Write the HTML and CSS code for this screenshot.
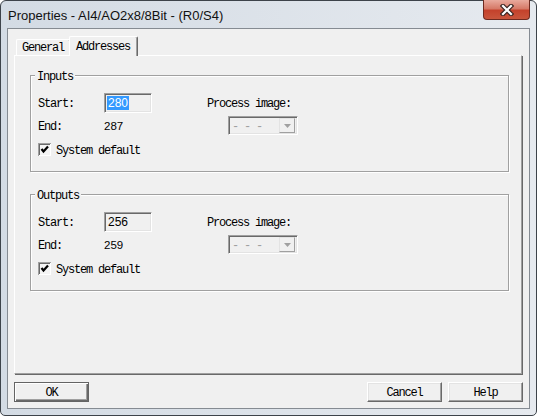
FILE: index.html
```html
<!DOCTYPE html>
<html>
<head>
  <title>Properties - AI4/AO2x8/8Bit - (R0/S4)</title>
  <link rel="stylesheet" href="styles.css">
</head>
<body>

  <div class="window">
    <div class="titlebar">
      <span class="title">Properties - AI4/AO2x8/8Bit - (R0/S4)</span>
      <button class="close">
        <svg width="14" height="12" viewBox="0 0 14 12">
          <path d="M3 2 L11 10 M11 2 L3 10" stroke="#3b2622" stroke-width="4.5" stroke-linecap="square"/>
          <path d="M3 2 L11 10 M11 2 L3 10" stroke="#fff" stroke-width="2.2" stroke-linecap="square"/>
        </svg>
      </button>
    </div>

    <div class="client">
      <div class="tabs">
        <div class="tab">General</div>
        <div class="tab active">Addresses</div>
      </div>

      <div class="panel">
        <div class="group">
          <div class="legend">Inputs</div>
          <div class="fields">
            <span class="lbl">Start:</span>
            <span class="edit"><span class="sel">280</span></span>
            <span class="lbl">Process image:</span>
            <span class="lbl">End:</span>
            <span class="num">287</span>
            <span class="combo">
              <span class="combo-text">- - -</span>
              <span class="drop"><svg width="7" height="4" viewBox="0 0 7 4"><path d="M0 0 H7 L3.5 4 Z" fill="#a0a0a0"/></svg></span>
            </span>
            <span class="check">
              <svg class="box" width="13" height="13" viewBox="0 0 13 13">
                <rect x="0" y="0" width="13" height="13" fill="#a0a0a0"/>
                <rect x="1" y="1" width="12" height="12" fill="#fff"/>
                <rect x="1" y="1" width="11" height="11" fill="#696969"/>
                <rect x="2" y="2" width="10" height="10" fill="#f4f4f4"/>
                <path d="M3.5 6 L5.5 8.5 L10 3.5" stroke="#000" stroke-width="2.2" fill="none"/>
              </svg>
              <span class="check-text">System default</span>
            </span>
          </div>
        </div>

        <div class="group">
          <div class="legend">Outputs</div>
          <div class="fields">
            <span class="lbl">Start:</span>
            <span class="edit"><span class="val">256</span></span>
            <span class="lbl">Process image:</span>
            <span class="lbl">End:</span>
            <span class="num">259</span>
            <span class="combo">
              <span class="combo-text">- - -</span>
              <span class="drop"><svg width="7" height="4" viewBox="0 0 7 4"><path d="M0 0 H7 L3.5 4 Z" fill="#a0a0a0"/></svg></span>
            </span>
            <span class="check">
              <svg class="box" width="13" height="13" viewBox="0 0 13 13">
                <rect x="0" y="0" width="13" height="13" fill="#a0a0a0"/>
                <rect x="1" y="1" width="12" height="12" fill="#fff"/>
                <rect x="1" y="1" width="11" height="11" fill="#696969"/>
                <rect x="2" y="2" width="10" height="10" fill="#f4f4f4"/>
                <path d="M3.5 6 L5.5 8.5 L10 3.5" stroke="#000" stroke-width="2.2" fill="none"/>
              </svg>
              <span class="check-text">System default</span>
            </span>
          </div>
        </div>
      </div>

      <div class="buttons">
        <button class="btn default">OK</button>
        <span class="spacer"></span>
        <button class="btn">Cancel</button>
        <button class="btn">Help</button>
      </div>
    </div>
  </div>

</body>
</html>
```

FILE: styles.css
```css
body {
  margin: 0;
  background: #fff;
}

.window {
  width: 537px;
  height: 416px;
  box-sizing: border-box;
  border: 1px solid #3d434a;
  border-radius: 6px 6px 5px 5px;
  background: linear-gradient(to right, #d3dbe4, #e6eaef);
  padding: 0 6px 6px 6px;
  display: flex;
  flex-direction: column;
}

.titlebar {
  height: 27px;
  display: flex;
  align-items: flex-start;
}

.title {
  font-family: "Liberation Sans", sans-serif;
  font-size: 13px;
  color: #111;
  padding: 7px 0 0 1px;
}

.close {
  margin: -1px 0 0 auto;
  width: 47px;
  height: 20px;
  padding: 0;
  border: 1px solid #6e2a20;
  border-top: none;
  border-radius: 0 0 4px 4px;
  background: linear-gradient(#e9aa9d, #d67a68 45%, #c4422c 55%, #c9553c);
  display: flex;
  align-items: center;
  justify-content: center;
}

.client {
  flex: 1;
  background: #f0f0f0;
  border: 1px solid #858b92;
  padding: 7px 6px 6px 6px;
  display: flex;
  flex-direction: column;
  font-family: "Liberation Mono", monospace;
  font-size: 12px;
  letter-spacing: -1.2px;
  color: #000;
}

.tabs {
  height: 19px;
  display: flex;
  align-items: flex-end;
  padding-left: 2px;
}

.tab {
  height: 16px;
  line-height: 17px;
  box-sizing: border-box;
  padding: 0 6px 0 5px;
  border: 1px solid #fff;
  border-right-color: #696969;
  border-bottom: none;
  border-radius: 2px 2px 0 0;
  box-shadow: inset -1px 0 0 #a0a0a0;
  background: #f0f0f0;
}

.tab.active {
  height: 20px;
  line-height: 20px;
  padding: 0 7px 0 6px;
  margin: 0 0 -1px -2px;
  position: relative;
  z-index: 1;
}

.panel {
  flex: 1;
  margin-right: 1px;
  border: 1px solid #fff;
  border-right-color: #a0a0a0;
  border-bottom-color: #a0a0a0;
  box-shadow: 1px 1px 0 #696969;
  padding: 19px 12px 0 15px;
}

.group {
  height: 97px;
  box-sizing: border-box;
  border: 1px solid #a0a0a0;
  box-shadow: 1px 1px 0 #fff, inset 1px 1px 0 #fff;
  padding: 0 7px;
  margin-bottom: 22px;
}

.legend {
  width: fit-content;
  line-height: 14px;
  margin: -8px 0 0 -3px;
  padding: 2px 2px 0 2px;
  background: #f0f0f0;
}

.fields {
  margin-top: 9px;
  display: grid;
  grid-template-columns: 66px 103px 1fr;
  grid-template-rows: 20px 19px 13px;
  row-gap: 3px;
  align-items: center;
}

.lbl {
  padding-top: 2px;
}

.edit {
  width: 48px;
  height: 20px;
  box-sizing: border-box;
  border: 1px solid #a0a0a0;
  border-right-color: #fff;
  border-bottom-color: #fff;
  box-shadow: inset 1px 1px 0 #696969, inset -1px -1px 0 #e3e3e3;
  background: #f0f0f0;
  display: flex;
  align-items: center;
  padding-left: 2px;
  font-family: "Liberation Sans", sans-serif;
  font-size: 12px;
  letter-spacing: 0;
}

.sel {
  background: #3399ff;
  color: #fff;
  line-height: 14px;
  padding: 0 1px;
}

.val {
  padding: 0 1px;
}

.num {
  font-family: "Liberation Sans", sans-serif;
  font-size: 11.5px;
  letter-spacing: 0;
  padding-top: 1px;
}

.combo {
  width: 70px;
  height: 19px;
  margin-left: 21px;
  box-sizing: border-box;
  border: 1px solid #a0a0a0;
  border-right-color: #fff;
  border-bottom-color: #fff;
  box-shadow: inset 1px 1px 0 #696969, inset -1px -1px 0 #e3e3e3;
  background: #f0f0f0;
  display: flex;
  align-items: center;
  padding: 2px;
}

.combo-text {
  flex: 1;
  color: #a0a0a0;
  padding: 2px 0 0 1px;
}

.drop {
  width: 16px;
  height: 15px;
  box-sizing: border-box;
  border: 1px solid #e3e3e3;
  border-right-color: #a0a0a0;
  border-bottom-color: #a0a0a0;
  display: flex;
  align-items: center;
  justify-content: center;
}

.check {
  grid-column: 1 / -1;
  margin-top: 10px;
  display: flex;
  align-items: center;
  gap: 5px;
}

.check-text {
  padding-top: 2px;
}

.buttons {
  margin-top: 8px;
  display: flex;
  gap: 6px;
}

.spacer {
  flex: 1;
}

.btn {
  width: 75px;
  height: 20px;
  padding: 2px 0 0 0;
  font-family: "Liberation Mono", monospace;
  font-size: 12px;
  letter-spacing: -1.2px;
  color: #000;
  background: #f0f0f0;
  border: 1px solid #fff;
  border-right-color: #696969;
  border-bottom-color: #696969;
  box-shadow: inset -1px -1px 0 #a0a0a0, inset 1px 1px 0 #e3e3e3;
}

.btn.default {
  border: 1px solid #646464;
  box-shadow: inset 1px 1px 0 #fff, inset -1px -1px 0 #696969, inset -2px -2px 0 #a0a0a0;
}
```
